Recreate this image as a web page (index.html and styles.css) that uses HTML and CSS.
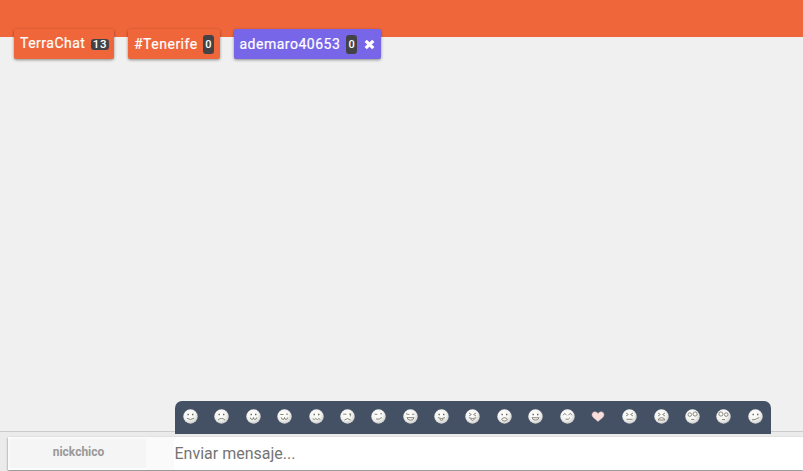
FILE: index.html
```html
<!DOCTYPE html>
<html lang="es">
<head>
<meta charset="utf-8">
<title>TerraChat</title>
<link rel="stylesheet" href="styles.css">
</head>
<body>
<div class="app">
  <header class="topbar">
    <nav class="tabs">
      <div class="tab tab-main"><span>TerraChat</span><span class="badge badge-wide">13</span></div>
      <div class="tab tab-room"><span>#Tenerife</span><span class="badge">0</span></div>
      <div class="tab tab-private"><span>ademaro40653</span><span class="badge">0</span>
        <svg class="close" viewBox="0 0 11 11"><path d="M1.7 1.9l7.6 7.2M9.3 1.9l-7.6 7.2"/></svg>
      </div>
    </nav>
  </header>
  <main class="messages"></main>
  <footer class="composer">
    <div class="emojis" id="emojis"></div>
    <div class="entry">
      <div class="nick">nickchico</div>
      <div class="message">Enviar mensaje...</div>
    </div>
  </footer>
</div>
<svg class="defs" width="0" height="0">
  <defs>
    <radialGradient id="skin" cx=".42" cy=".35" r=".65">
      <stop offset="0" stop-color="#fff"/><stop offset=".6" stop-color="#f3f3f0"/><stop offset="1" stop-color="#cfd0cf"/>
    </radialGradient>
  </defs>
</svg>
<script src="emojis.js"></script>
</body>
</html>
```
FILE: styles.css
```css
* { box-sizing: border-box; }
body { margin: 0; font-family: Roboto, sans-serif; background: #f0f0f0; overflow: hidden; }
.app { display: flex; flex-direction: column; height: 471px; }
.topbar { height: 37px; padding: 29px 0 0 14px; background: #ef663a; }
.tabs { display: flex; gap: 14px; }
.tab {
  display: flex; align-items: center; justify-content: space-between;
  height: 30px; padding: 0 6px; border-radius: 2px;
  color: #fff; font-size: 14px; font-weight: 400; letter-spacing: 0.5px; white-space: nowrap;
  background: #ef663a; box-shadow: 0 1px 3px rgba(0, 0, 0, .42);
  -webkit-text-stroke: 0.2px #fff;
}
.tab-main { width: 100px; padding-right: 5px; }
.tab-main > span:first-child { margin-top: -2px; }
.tab-room { width: 92px; }
.tab-private { width: 147px; padding: 0 6px 0 5.5px; background: #7866e9; }
.badge {
  width: 11px; height: 19px; border-radius: 3px; background: #434347;
  font-size: 11px; font-weight: 500; line-height: 19px; text-align: center; letter-spacing: 0;
  -webkit-text-stroke: 0;
}
.badge-wide { width: 18px; height: 11px; font-size: 11.5px; line-height: 11px; letter-spacing: 0.6px; }
.tab-private .badge { margin-right: 1px; }
.close { width: 11px; height: 11px; fill: none; stroke: #fff; stroke-width: 3.2; }
.messages { flex: 1; }
.composer { position: relative; height: 40px; padding: 5px 0 1px 8px; border-top: 1px solid #cbcbcb; background: #ebebeb; }
.emojis {
  position: absolute; left: 175px; top: -31px; width: 596px; height: 33px;
  display: flex; align-items: center; justify-content: space-between; padding: 0 8px 2px;
  border-radius: 7px 7px 0 0; background: #445064;
}
.face { width: 15px; height: 15px; overflow: visible; }
.face .skin { fill: url(#skin); }
.face .ink { fill: none; stroke: #77756d; stroke-width: .85; }
.face .eyes { fill: #66645d; }
.heart { fill: #f8dedc; stroke: #dcb5b5; stroke-width: .5; }
.entry { display: flex; height: 33px; background: #fff; box-shadow: 0 1px 2px rgba(0, 0, 0, .5); }
.nick {
  width: 138px; height: 31px; border: solid #fafafa; border-width: 2px 0 0 2px; background: #f5f5f5; color: #999;
  font-size: 12px; font-weight: 700; line-height: 26px; text-align: center; padding-left: 1px;
}
.message { flex: 1; padding-left: 28.5px; background: linear-gradient(90deg, #fafafa 28px, #fff 28px); color: #747474; font-size: 16px; line-height: 33px; }
.defs { position: absolute; }
```
FILE: emojis.js
```js
const dots = '<path class="eyes" d="M4.5 4.8h1.4v1.5H4.5zM9 4.8h1.4v1.5H9z"/>';
const ink = d => `<path class="ink" d="${d}"/>`;
const squeezed = ink('M4 4l2.4 1.5L4 7M11 4L8.6 5.5 11 7');
const features = [
  dots + ink('M4 9.2Q7.5 12 11 9.2'),
  dots + ink('M4 11Q7.5 7.8 11 11'),
  dots + ink('M4.3 8.5Q4.5 10.5 6 10.5T7.5 8.5Q7.5 10.5 9 10.5T10.7 8.5'),
  ink('M3.2 5.5h3.4M9 5.2h2M4.3 8.5Q4.5 10.5 6 10.5T7.5 8.5Q7.5 10.5 9 10.5T10.7 8.5'),
  dots + ink('M3.7 9.7l1.4.9 1.6-1 1.6 1 1.5-1 1.5.9'),
  ink('M3.2 5.2h3.4M9 5h2.3M10.4 5v2.4M4.5 11Q7.5 8 10.5 11'),
  ink('M3.5 5.3h3M9.2 4.8h1.8M5 9.9Q8.5 11.2 10.8 8.5'),
  ink('M3 4.8l3.4.8M8.8 5.3h2.6M4 8.6h7Q10.5 11.2 7.5 11.2T4 8.6z'),
  dots + ink('M4 8.6Q7.5 10.5 11 8.6M6 9.6v1.1Q7.5 12 9 10.7V9.6'),
  squeezed + ink('M3.8 8.7Q7.5 10.5 11.2 8.7M5.5 9.7Q7.5 13.2 9.5 9.7'),
  dots + ink('M4.7 10.5Q5 8.7 7.5 8.7T10.3 10.5Q9 12 7.5 12T4.7 10.5z'),
  dots + ink('M4 8.7h7Q10.5 11.1 7.5 11.1T4 8.7z'),
  ink('M3 6.3l1.8-2 1.8 2M8.4 6.3l1.8-2 1.8 2M5.5 10.2Q9 11 9.8 8.8'),
  null,
  squeezed + ink('M4.5 10.3h6'),
  squeezed + ink('M4.3 11Q4.5 8.6 7.5 8.6T10.7 11z'),
  ink('M3 5.6a1.8 1.8 0 1 0 3.6 0a1.8 1.8 0 1 0-3.6 0M8 5a2.1 2.1 0 1 0 4.2 0a2.1 2.1 0 1 0-4.2 0M6.2 10.5h3'),
  ink('M2.8 5a2.1 2.1 0 1 0 4.2 0a2.1 2.1 0 1 0-4.2 0M8.4 5.6a1.8 1.8 0 1 0 3.6 0a1.8 1.8 0 1 0-3.6 0M6 10.5h3'),
  dots + ink('M4 10.8l3-.3 4.2-2')
];
document.getElementById('emojis').innerHTML = features.map(f => f
  ? `<svg class="face" viewBox="0 0 15 15"><circle class="skin" cx="7.5" cy="7.5" r="7.2"/>${f}</svg>`
  : '<svg class="face" viewBox="0 0 15 15"><path class="heart" d="M7 12.5L2 8.3Q.8 6.8 1 5.2Q1.4 2.9 3.8 2.7Q5.9 2.7 7 4.6Q8.1 2.7 10.2 2.7Q12.6 2.9 13 5.2Q13.2 6.8 12 8.3z"/></svg>'
).join('');
```
